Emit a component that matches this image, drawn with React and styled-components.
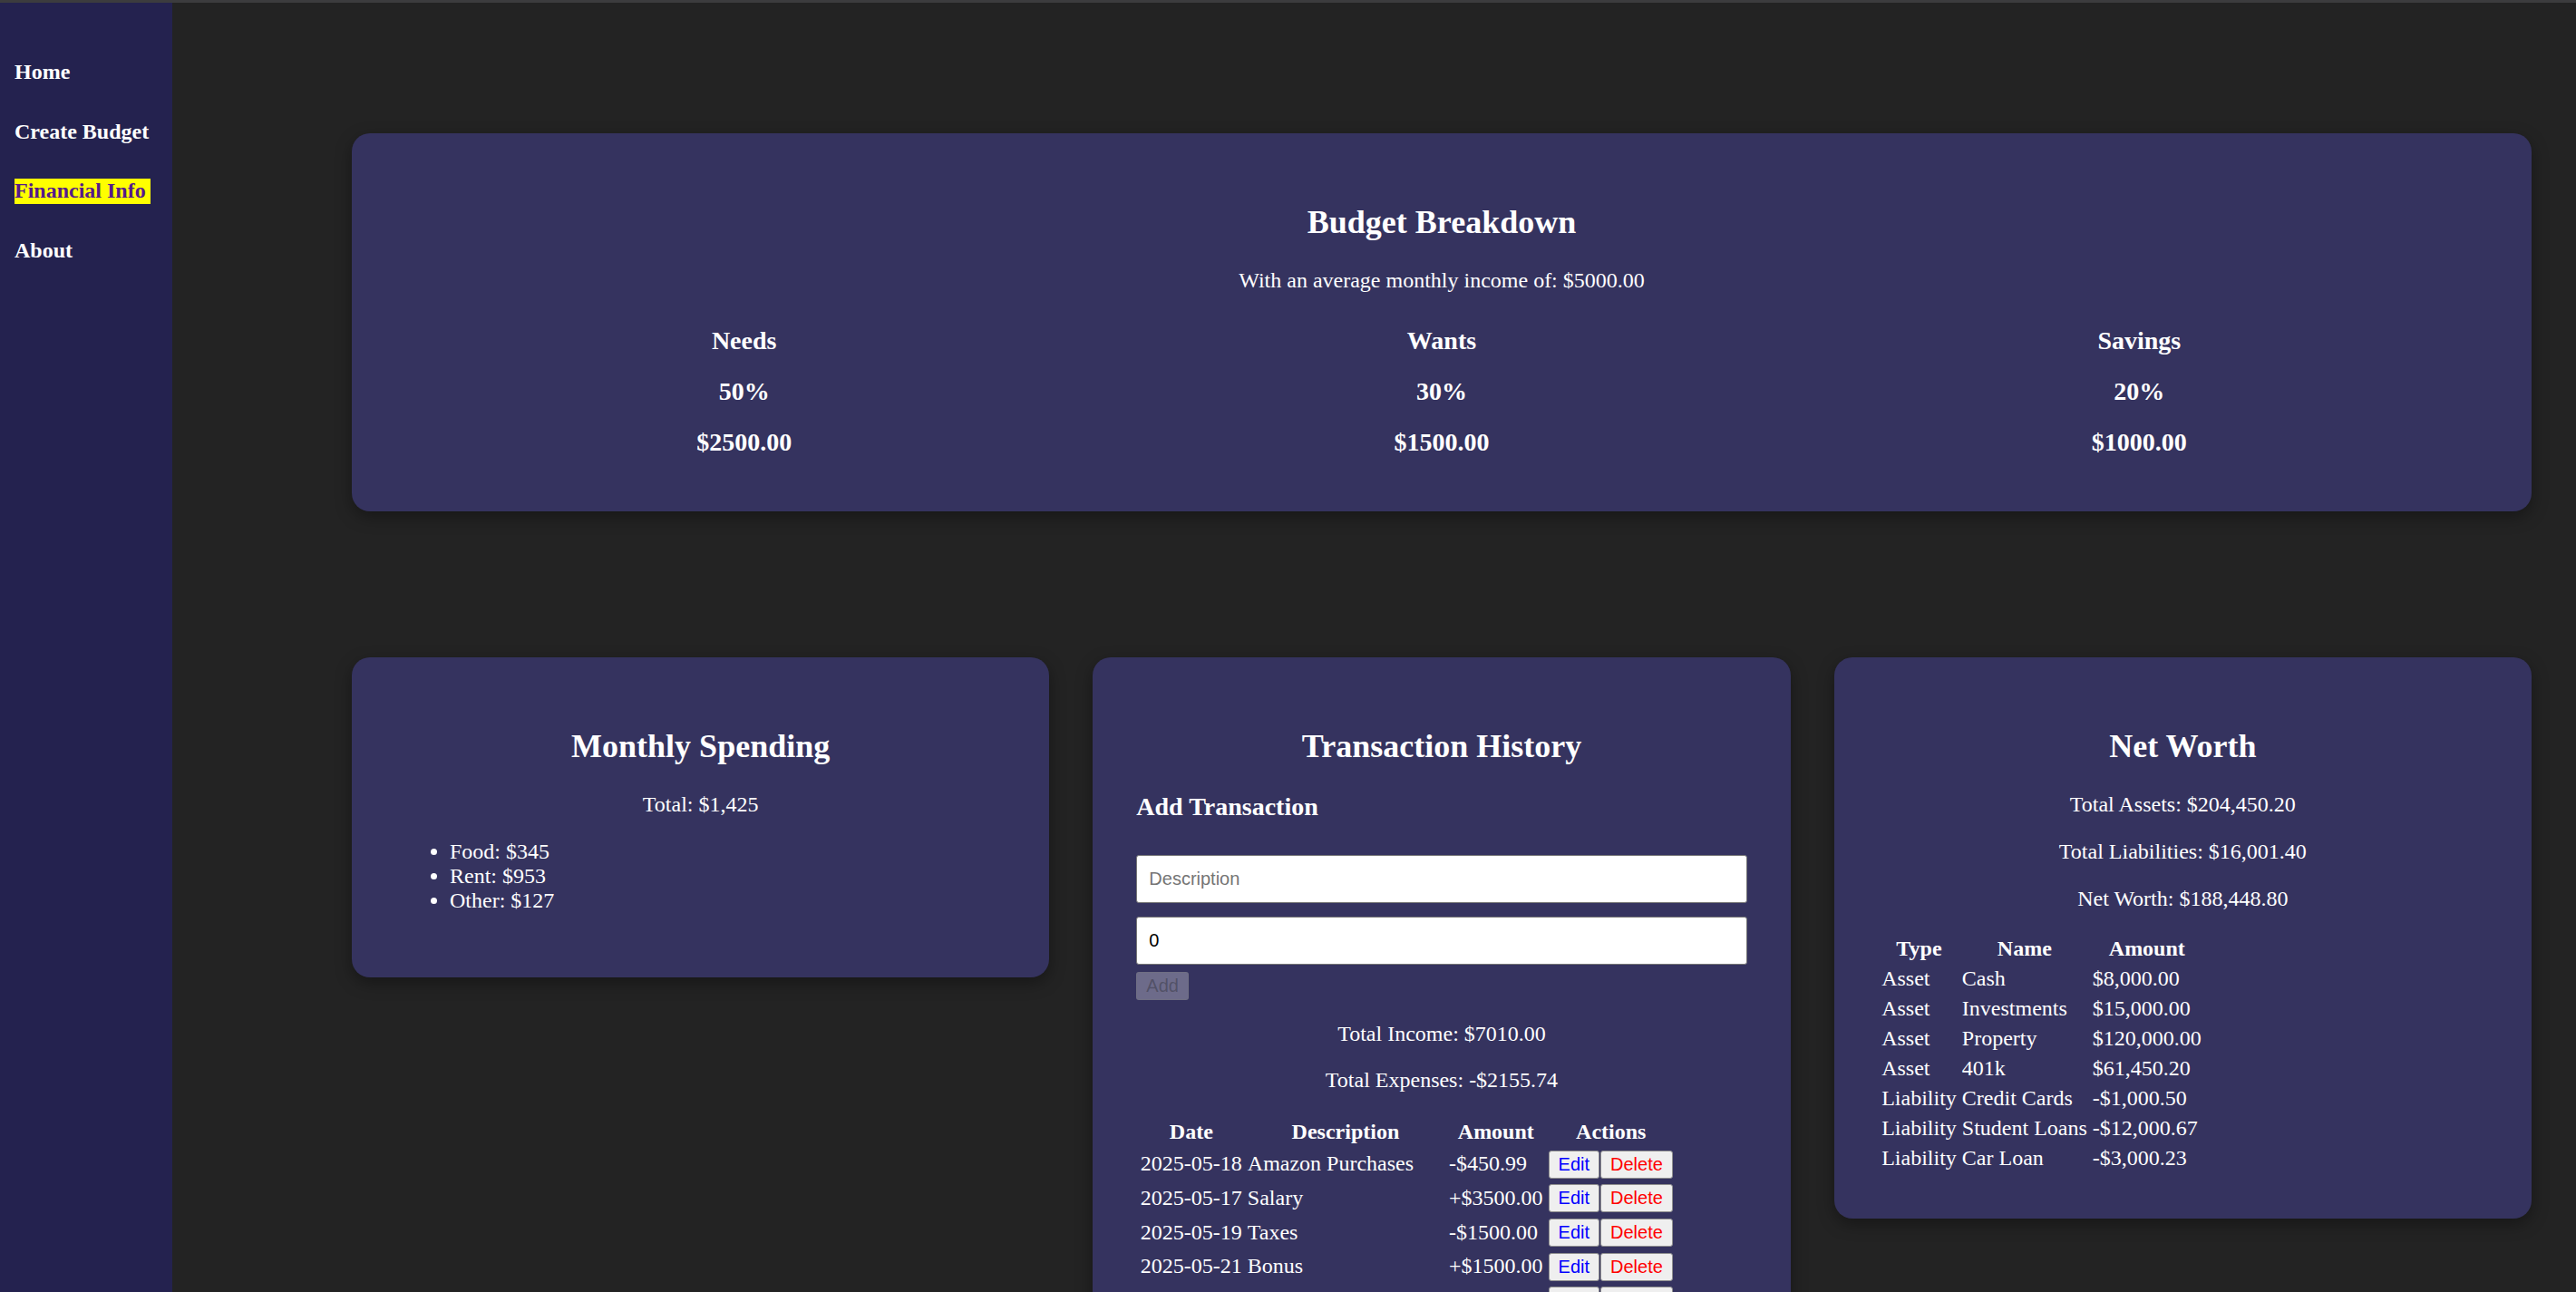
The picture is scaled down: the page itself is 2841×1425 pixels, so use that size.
import { createGlobalStyle, styled } from "styled-components";

const GlobalStyle = createGlobalStyle`
  html, body {
    margin: 0;
    padding: 0;
    background: #232323;
  }
  body {
    font-family: "Liberation Serif", "Times New Roman", serif;
    font-size: 24px;
    color: #fff;
  }
`;

const Layout = styled.div`
  display: flex;
  height: 100vh;
  box-sizing: border-box;
  border-top: 3px solid #3c3c3e;
  background: #232323;
`;

const Sidebar = styled.nav`
  width: 190px;
  flex-shrink: 0;
  box-sizing: border-box;
  padding: 63px 0 0 16px;
  background: #24224f;
  display: flex;
  flex-direction: column;
  align-items: flex-start;
  gap: 38px;
`;

const NavLink = styled.a`
  font-size: 24px;
  font-weight: bold;
  line-height: 27.6px;
  text-decoration: none;
  color: ${(p) => (p.$active ? "#551a8b" : "#fff")};
  background: ${(p) => (p.$active ? "#ffff00" : "transparent")};
  padding-right: ${(p) => (p.$active ? "5px" : "0")};
`;

const Main = styled.main`
  flex: 1;
  min-width: 0;
  overflow-y: auto;
  scrollbar-width: none;
  box-sizing: border-box;
  padding: 144px 49px 0 198px;
`;

const Card = styled.section`
  background: #35335f;
  border-radius: 20px;
  padding: 48px;
  box-shadow: 0 6px 18px rgba(0, 0, 0, 0.35);
`;

const BudgetCard = styled(Card)`
  margin-bottom: 161px;
`;

const Title = styled.h2`
  font-size: 36px;
  line-height: 41.4px;
  margin: 30px 0;
  text-align: center;
`;

const Text = styled.p`
  margin: 24px 0;
  line-height: 27.6px;
  text-align: center;
`;

const Columns = styled.div`
  display: grid;
  grid-template-columns: repeat(3, 1fr);
`;

const Column = styled.div`
  display: flex;
  flex-direction: column;
  align-items: center;
`;

const Figure = styled.p`
  font-size: 28px;
  font-weight: bold;
  line-height: 32px;
  margin: 12px 0;
`;

const CardGrid = styled.div`
  display: grid;
  grid-template-columns: repeat(3, 1fr);
  gap: 48px;
  align-items: start;
  padding-bottom: 48px;
`;

const SpendList = styled.ul`
  margin: 24px 0 22px;
  padding-left: 60px;
  line-height: 27.2px;
`;

const Subheading = styled.h3`
  font-size: 28px;
  line-height: 32.2px;
  margin: 28px 0 36px;
`;

const Form = styled.form`
  display: flex;
  flex-direction: column;
  align-items: flex-start;
`;

const Field = styled.input`
  width: 100%;
  height: 53px;
  box-sizing: border-box;
  padding: 0 13px;
  margin: 0 0 ${(p) => (p.$last ? "8px" : "15px")};
  border: 1px solid #767676;
  border-radius: 3px;
  background: #fff;
  color: #000;
  font-family: "Liberation Sans", Arial, sans-serif;
  font-size: 20px;
  &::placeholder {
    color: #757575;
  }
`;

const AddButton = styled.button`
  height: 31px;
  padding: 0 10px;
  border: 1px solid rgba(118, 118, 118, 0.3);
  border-radius: 3px;
  background: rgba(239, 239, 239, 0.3);
  color: rgba(16, 16, 16, 0.3);
  font-family: "Liberation Sans", Arial, sans-serif;
  font-size: 20px;
`;

const Table = styled.table`
  border-spacing: 3px;
  line-height: 27.6px;
  th,
  td {
    padding: ${(p) => (p.$roomy ? "1.8px 1.5px" : "1.2px 1.5px")};
    white-space: nowrap;
  }
  th {
    font-weight: bold;
    text-align: center;
  }
  td {
    text-align: left;
  }
`;

const ActionButton = styled.button`
  height: 31px;
  padding: 0 10px;
  margin-right: 1px;
  border: 1px solid #8f8f8f;
  border-radius: 3px;
  background: #efefef;
  color: ${(p) => (p.$danger ? "#ff0000" : "#0000ff")};
  font-family: "Liberation Sans", Arial, sans-serif;
  font-size: 20px;
`;

const navItems = ["Home", "Create Budget", "Financial Info", "About"];

const splits = [
  { label: "Needs", pct: "50%", amount: "$2500.00" },
  { label: "Wants", pct: "30%", amount: "$1500.00" },
  { label: "Savings", pct: "20%", amount: "$1000.00" },
];

const spending = ["Food: $345", "Rent: $953", "Other: $127"];

const transactions = [
  ["2025-05-18", "Amazon Purchases", "-$450.99"],
  ["2025-05-17", "Salary", "+$3500.00"],
  ["2025-05-19", "Taxes", "-$1500.00"],
  ["2025-05-21", "Bonus", "+$1500.00"],
  ["2025-05-22", "Freelance Web Design", "+$2010.00"],
  ["2025-05-23", "Groceries", "-$204.75"],
];

const holdings = [
  ["Asset", "Cash", "$8,000.00"],
  ["Asset", "Investments", "$15,000.00"],
  ["Asset", "Property", "$120,000.00"],
  ["Asset", "401k", "$61,450.20"],
  ["Liability", "Credit Cards", "-$1,000.50"],
  ["Liability", "Student Loans", "-$12,000.67"],
  ["Liability", "Car Loan", "-$3,000.23"],
];

const App = () => {
  return (
    <>
      <GlobalStyle />
      <Layout>
        <Sidebar>
          {navItems.map((item) => (
            <NavLink key={item} href="#" $active={item === "Financial Info"}>
              {item}
            </NavLink>
          ))}
        </Sidebar>
        <Main>
          <BudgetCard>
            <Title>Budget Breakdown</Title>
            <Text>With an average monthly income of: $5000.00</Text>
            <Columns>
              {splits.map((s) => (
                <Column key={s.label}>
                  <Figure>{s.label}</Figure>
                  <Figure>{s.pct}</Figure>
                  <Figure>{s.amount}</Figure>
                </Column>
              ))}
            </Columns>
          </BudgetCard>

          <CardGrid>
            <Card>
              <Title>Monthly Spending</Title>
              <Text>Total: $1,425</Text>
              <SpendList>
                {spending.map((s) => (
                  <li key={s}>{s}</li>
                ))}
              </SpendList>
            </Card>

            <Card>
              <Title>Transaction History</Title>
              <Subheading>Add Transaction</Subheading>
              <Form onSubmit={(e) => e.preventDefault()}>
                <Field type="text" placeholder="Description" />
                <Field type="number" defaultValue={0} $last />
                <AddButton type="submit" disabled>
                  Add
                </AddButton>
              </Form>
              <Text>Total Income: $7010.00</Text>
              <Text>Total Expenses: -$2155.74</Text>
              <Table $roomy>
                <thead>
                  <tr>
                    <th>Date</th>
                    <th>Description</th>
                    <th>Amount</th>
                    <th>Actions</th>
                  </tr>
                </thead>
                <tbody>
                  {transactions.map(([date, desc, amount]) => (
                    <tr key={date + desc}>
                      <td>{date}</td>
                      <td>{desc}</td>
                      <td>{amount}</td>
                      <td>
                        <ActionButton>Edit</ActionButton>
                        <ActionButton $danger>Delete</ActionButton>
                      </td>
                    </tr>
                  ))}
                </tbody>
              </Table>
            </Card>

            <Card>
              <Title>Net Worth</Title>
              <Text>Total Assets: $204,450.20</Text>
              <Text>Total Liabilities: $16,001.40</Text>
              <Text>Net Worth: $188,448.80</Text>
              <Table>
                <thead>
                  <tr>
                    <th>Type</th>
                    <th>Name</th>
                    <th>Amount</th>
                  </tr>
                </thead>
                <tbody>
                  {holdings.map(([type, name, amount]) => (
                    <tr key={name}>
                      <td>{type}</td>
                      <td>{name}</td>
                      <td>{amount}</td>
                    </tr>
                  ))}
                </tbody>
              </Table>
            </Card>
          </CardGrid>
        </Main>
      </Layout>
    </>
  );
};

export default App;
